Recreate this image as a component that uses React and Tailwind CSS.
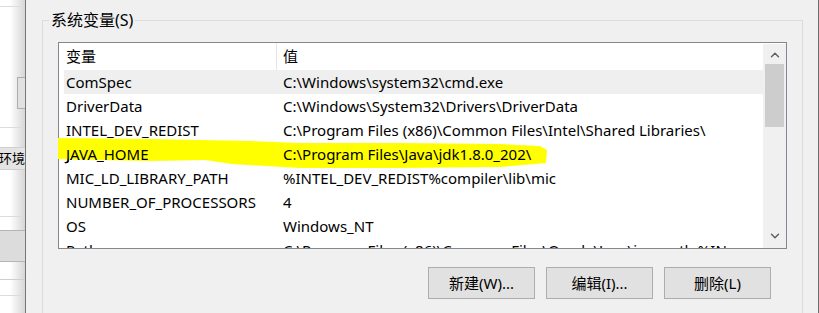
import { ChevronUp, ChevronDown } from 'lucide-react'

const font = { fontFamily: '"Noto Sans", "Noto Sans CJK SC", sans-serif' }

const rows = [
  { name: 'ComSpec', value: 'C:\\Windows\\system32\\cmd.exe', hover: true },
  { name: 'DriverData', value: 'C:\\Windows\\System32\\Drivers\\DriverData' },
  { name: 'INTEL_DEV_REDIST', value: 'C:\\Program Files (x86)\\Common Files\\Intel\\Shared Libraries\\' },
  { name: 'JAVA_HOME', value: 'C:\\Program Files\\Java\\jdk1.8.0_202\\' },
  { name: 'MIC_LD_LIBRARY_PATH', value: '%INTEL_DEV_REDIST%compiler\\lib\\mic' },
  { name: 'NUMBER_OF_PROCESSORS', value: '4' },
  { name: 'OS', value: 'Windows_NT' },
  { name: 'Path', value: 'C:\\Program Files (x86)\\Common Files\\Oracle\\Java\\javapath;%IN' },
]

// yellow marker stroke drawn over the JAVA_HOME row
const Highlight = () => (
  <svg className="absolute left-0 top-0 pointer-events-none" width="819" height="313">
    <path
      d="M58 138 L150 139 L250 141 L300 143 L400 143 L500 144 L540 146 L547 150 L546 163 L500 167 L400 168 L300 168 L232 164 L205 160 L150 161 L100 160 L58 159 Z"
      fill="#ffff00"
    />
  </svg>
)

const Btn = ({ children }) => (
  <button className="w-[107px] h-[32px] bg-[#e1e1e1] border border-[#adadad] text-[15px] text-black flex items-center justify-center">
    {children}
  </button>
)

export default function App() {
  return (
    <div className="relative w-[819px] h-[313px] flex overflow-hidden bg-[#f0f0f0] text-black" style={font}>
      {/* background window peeking out on the left */}
      <div className="relative w-[25px] shrink-0 bg-gradient-to-r from-white from-40% to-[#d6d6d6] flex flex-col">
        <div className="h-[7px] border-b border-[#dcdcdc]" />
        <div className="ml-[17px] mt-[70px] h-[32px] bg-[#e1e1e1] border border-[#adadad] border-r-0" />
        <div className="mt-[18px] border-b border-[#dcdcdc]" />
        <div className="mt-[19px] h-[23px] bg-[#e4e4e4] border-y border-[#cfcfcf] text-[13px] leading-[21px] whitespace-nowrap overflow-hidden flex justify-end">
          环境
        </div>
        <div className="mt-[46px] border-b border-[#dcdcdc]" />
        <div className="mt-[13px] h-[32px] bg-[#dcdcdc] border-y border-[#b4b4b4]" />
        <div className="mt-[17px] border-b border-[#cfcfcf]" />
        <div className="mt-[15px] border-b border-[#dcdcdc]" />
      </div>
      <div className="w-px shrink-0 bg-[#777]" />

      {/* dialog */}
      <div className="flex-1 min-w-0 pl-[16px] pt-[20px] pr-[15px]">
        <div className="relative h-[320px] border border-[#dcdcdc] pl-[15px] pr-[15px] pt-[21px]">
          <div className="absolute left-[6px] -top-[11px] px-[2px] bg-[#f0f0f0] text-[16px] leading-[20px]">
            系统变量(S)
          </div>

          {/* list view */}
          <div className="h-[207px] border border-[#828790] bg-white flex">
            <div className="flex-1 min-w-0 flex flex-col overflow-hidden">
              <div className="h-[27px] shrink-0 flex text-[15px] leading-[27px]">
                <div className="w-[218px] shrink-0 pl-[7px] border-r border-[#e5e5e5]">变量</div>
                <div className="pl-[6px]">值</div>
              </div>
              {rows.map((r) => (
                <div
                  key={r.name}
                  className={`h-[24px] shrink-0 flex ml-[5px] text-[15px] leading-[24px] whitespace-nowrap ${r.hover ? 'bg-[#efefef]' : ''}`}
                >
                  <div className="w-[213px] shrink-0 pl-[2px]">{r.name}</div>
                  <div className="pl-[6px]">{r.value}</div>
                </div>
              ))}
            </div>
            {/* scrollbar */}
            <div className="w-[23px] shrink-0 bg-[#f0f0f0] flex flex-col items-center mt-px">
              <ChevronUp className="mt-[4px] w-[14px] h-[14px] text-[#606060]" strokeWidth={2.5} />
              <div className="mt-[2px] w-[19px] h-[63px] bg-[#cdcdcd]" />
              <div className="flex-1" />
              <ChevronDown className="mb-[5px] w-[14px] h-[14px] text-[#606060]" strokeWidth={2.5} />
            </div>
          </div>

          <div className="mt-[18px] flex justify-end gap-[11px] pr-[16px]">
            <Btn>新建(W)...</Btn>
            <Btn>编辑(I)...</Btn>
            <Btn>删除(L)</Btn>
          </div>
        </div>
      </div>
      <div className="w-px shrink-0 bg-[#6e6e6e]" />

      <Highlight />
      {/* redraw the highlighted row text above the marker */}
      <div className="absolute left-[66px] top-[142px] text-[15px] leading-[24px] pointer-events-none whitespace-nowrap flex">
        <div className="w-[217px]">JAVA_HOME</div>
        <div>C:\Program Files\Java\jdk1.8.0_202\</div>
      </div>
    </div>
  )
}
